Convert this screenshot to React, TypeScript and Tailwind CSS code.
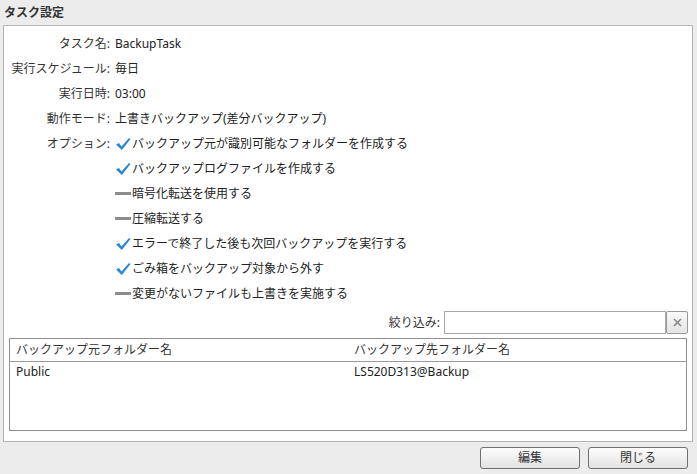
import React from 'react';

const font = { fontFamily: '"Noto Sans", "Noto Sans CJK JP", sans-serif' };

const options = [
  { on: true, text: 'バックアップ元が識別可能なフォルダーを作成する' },
  { on: true, text: 'バックアップログファイルを作成する' },
  { on: false, text: '暗号化転送を使用する' },
  { on: false, text: '圧縮転送する' },
  { on: true, text: 'エラーで終了した後も次回バックアップを実行する' },
  { on: true, text: 'ごみ箱をバックアップ対象から外す' },
  { on: false, text: '変更がないファイルも上書きを実施する' },
];

const Check = () => (
  <svg width="16" height="14" viewBox="0 0 16 14" className="shrink-0">
    <path d="M1 7.5 L4 6 L6.5 9.5 L14 1 L15.5 2 L6.8 13 Z" fill="#2a86d6" />
  </svg>
);

const Dash = () => <span className="block w-[16px] h-[3px] bg-[#8c8c8c] shrink-0" />;

const Row = ({ label, children }: { label?: string; children: React.ReactNode }) => (
  <div className="flex items-center h-[25px]">
    <div className="w-[111px] text-right pr-[5px] text-[#333]">{label ? `${label}:` : ''}</div>
    <div className="flex items-center text-[#222]">{children}</div>
  </div>
);

export default function App() {
  return (
    <div style={font} className="w-[697px] h-[474px] bg-[#ececec] text-[12px] text-[#222] flex flex-col">
      <div className="h-[25px] pl-[4px] pt-[4px] font-bold text-[12px] text-[#333]">タスク設定</div>

      <div className="ml-[3px] w-[690px] h-[417px] border border-[#b4b4b4] bg-white flex flex-col pt-[5px]">
        <Row label="タスク名">BackupTask</Row>
        <Row label="実行スケジュール">毎日</Row>
        <Row label="実行日時">03:00</Row>
        <Row label="動作モード">上書きバックアップ(差分バックアップ)</Row>
        {options.map((o, i) => (
          <Row key={i} label={i === 0 ? 'オプション' : undefined}>
            {o.on ? <Check /> : <Dash />}
            <span className="ml-[1px]">{o.text}</span>
          </Row>
        ))}

        <div className="flex items-center justify-end mt-[5px] pr-[4px] h-[23px]">
          <span className="mr-[4px] text-[#333]">絞り込み:</span>
          <div className="w-[222px] h-[23px] border border-[#a8a8a8] bg-white" />
          <button className="w-[22px] h-[23px] border border-[#9a9a9a] rounded-[2px] bg-gradient-to-b from-[#fafafa] to-[#e4e4e4] flex items-center justify-center">
            <svg width="9" height="9" viewBox="0 0 9 9">
              <path d="M1 1 L8 8 M8 1 L1 8" stroke="#888" strokeWidth="1.6" />
            </svg>
          </button>
        </div>

        <div className="mx-[5px] mt-[4px] h-[93px] border border-[#8f8f8f] flex flex-col">
          <div className="flex h-[23px] items-center border-b border-[#9a9a9a] text-[#333]">
            <div className="w-[337px] pl-[6px]">バックアップ元フォルダー名</div>
            <div className="pl-[7px]">バックアップ先フォルダー名</div>
          </div>
          <div className="flex h-[19px] items-center">
            <div className="w-[337px] pl-[6px]">Public</div>
            <div className="pl-[7px]">LS520D313@Backup</div>
          </div>
        </div>
      </div>

      <div className="flex justify-end gap-[8px] pr-[9px] mt-[5px]">
        <button className="w-[100px] h-[22px] border border-[#707070] rounded-[3px] bg-gradient-to-b from-[#fdfdfd] to-[#e2e2e2] text-[12px] text-[#333]">編集</button>
        <button className="w-[100px] h-[22px] border border-[#707070] rounded-[3px] bg-gradient-to-b from-[#fdfdfd] to-[#e2e2e2] text-[12px] text-[#333]">閉じる</button>
      </div>
    </div>
  );
}
